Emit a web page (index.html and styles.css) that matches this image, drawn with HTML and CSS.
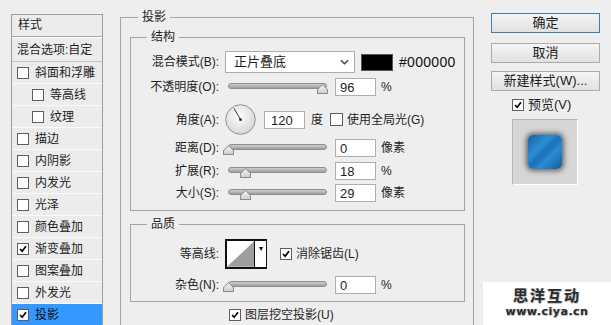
FILE: index.html
```html
<!DOCTYPE html>
<html lang="zh-CN">
<head>
    <meta charset="UTF-8">
    <title>图层样式</title>
    <link rel="stylesheet" href="styles.css">
</head>
<body>
    <div class="dialog">
        <div class="styles-list">
            <div class="list-head">样式</div>
            <div class="list-blend">混合选项:自定</div>
            <div class="list-item"><span class="check"></span>斜面和浮雕</div>
            <div class="list-item sub"><span class="check"></span>等高线</div>
            <div class="list-item sub"><span class="check"></span>纹理</div>
            <div class="list-item"><span class="check"></span>描边</div>
            <div class="list-item"><span class="check"></span>内阴影</div>
            <div class="list-item"><span class="check"></span>内发光</div>
            <div class="list-item"><span class="check"></span>光泽</div>
            <div class="list-item"><span class="check"></span>颜色叠加</div>
            <div class="list-item"><span class="check on"><svg viewBox="0 0 12 12"><path d="M2.5 6 L5 8.6 L9.6 2.8"/></svg></span>渐变叠加</div>
            <div class="list-item"><span class="check"></span>图案叠加</div>
            <div class="list-item"><span class="check"></span>外发光</div>
            <div class="list-item selected"><span class="check on"><svg viewBox="0 0 12 12"><path d="M2.5 6 L5 8.6 L9.6 2.8"/></svg></span>投影</div>
        </div>

        <div class="main">
            <fieldset class="group outer">
                <legend class="outer-title">投影</legend>

                <fieldset class="group structure">
                    <legend>结构</legend>
                    <div class="row r-blend">
                        <span class="lbl">混合模式(B):</span>
                        <div class="select">
                            <span>正片叠底</span>
                            <svg class="chev" viewBox="0 0 10 6"><path d="M1 1 L5 5 L9 1"/></svg>
                        </div>
                        <span class="swatch"></span>
                        <span class="hex">#000000</span>
                    </div>
                    <div class="row r-opacity">
                        <span class="lbl">不透明度(O):</span>
                        <div class="slider"><span class="track"></span><span class="thumb" style="left: 89px"></span></div>
                        <span class="num">96</span>
                        <span class="unit">%</span>
                    </div>
                    <div class="row r-angle">
                        <span class="lbl">角度(A):</span>
                        <svg class="dial" viewBox="0 0 31 31">
                            <defs>
                                <radialGradient id="dialFill" cx="0.45" cy="0.4" r="0.6">
                                    <stop offset="0" stop-color="#ffffff"/>
                                    <stop offset="1" stop-color="#d6d6d6"/>
                                </radialGradient>
                            </defs>
                            <circle cx="15.5" cy="15.5" r="14.8" fill="url(#dialFill)" stroke="#8a8a8a" stroke-width="0.9"/>
                            <line x1="15.5" y1="15.5" x2="9" y2="4.3" stroke="#333" stroke-width="1"/>
                            <circle cx="15.5" cy="15.5" r="1.5" fill="#333"/>
                        </svg>
                        <span class="num angle">120</span>
                        <span class="unit">度</span>
                        <span class="check global"></span>
                        <span class="check-text">使用全局光(G)</span>
                    </div>
                    <div class="row r-distance">
                        <span class="lbl">距离(D):</span>
                        <div class="slider"><span class="track"></span><span class="thumb" style="left: -5px"></span></div>
                        <span class="num">0</span>
                        <span class="unit">像素</span>
                    </div>
                    <div class="row r-spread">
                        <span class="lbl">扩展(R):</span>
                        <div class="slider"><span class="track"></span><span class="thumb" style="left: 12px"></span></div>
                        <span class="num">18</span>
                        <span class="unit">%</span>
                    </div>
                    <div class="row r-size">
                        <span class="lbl">大小(S):</span>
                        <div class="slider"><span class="track"></span><span class="thumb" style="left: 12px"></span></div>
                        <span class="num">29</span>
                        <span class="unit">像素</span>
                    </div>
                </fieldset>

                <fieldset class="group quality">
                    <legend>品质</legend>
                    <div class="row r-contour">
                        <span class="lbl">等高线:</span>
                        <div class="contour">
                            <svg class="curve" viewBox="0 0 28 26"><polygon points="0,26 28,0 28,26" fill="#9e9e9e"/></svg>
                            <span class="contour-drop">&#9662;</span>
                        </div>
                        <span class="check on anti"><svg viewBox="0 0 12 12"><path d="M2.5 6 L5 8.6 L9.6 2.8"/></svg></span>
                        <span class="check-text">消除锯齿(L)</span>
                    </div>
                    <div class="row r-noise">
                        <span class="lbl">杂色(N):</span>
                        <div class="slider"><span class="track"></span><span class="thumb" style="left: -5px"></span></div>
                        <span class="num">0</span>
                        <span class="unit">%</span>
                    </div>
                </fieldset>

                <div class="knockout">
                    <span class="check on"><svg viewBox="0 0 12 12"><path d="M2.5 6 L5 8.6 L9.6 2.8"/></svg></span>
                    <span class="check-text">图层挖空投影(U)</span>
                </div>
            </fieldset>
        </div>

        <div class="side">
            <button class="btn default">确定</button>
            <button class="btn">取消</button>
            <button class="btn">新建样式(W)...</button>
            <div class="preview-row">
                <span class="check on"><svg viewBox="0 0 12 12"><path d="M2.5 6 L5 8.6 L9.6 2.8"/></svg></span>
                <span class="check-text">预览(V)</span>
            </div>
            <div class="preview">
                <div class="preview-tile"></div>
            </div>
        </div>
    </div>

    <div class="watermark">
        <div class="wm-name">思洋互动</div>
        <div class="wm-url">www.ciya.cn</div>
    </div>
</body>
</html>
```

FILE: styles.css
```css
body {
    margin: 0;
    height: 325px;
    overflow: hidden;
    background-color: #eeeeee;
    color: #1e1e1e;
    font-family: 'Liberation Sans', 'Noto Sans CJK SC', sans-serif;
    font-size: 12px;
    line-height: 16px;
    position: relative;
}
.dialog {
    display: flex;
    align-items: flex-start;
    height: 325px;
    overflow: hidden;
}

/* left list of styles */
.styles-list {
    margin: 14px 0 0 11px;
    width: 92px;
    box-sizing: border-box;
    border: 1px solid #9c9c9c;
    border-bottom: none;
    background-color: #ececec;
}
.list-head {
    height: 21px;
    line-height: 20px;
    padding-left: 6px;
    border-bottom: 1px solid #a8a8a8;
    box-shadow: 0 1px 0 #ffffff;
}
.list-blend {
    height: 22px;
    line-height: 22px;
    margin-top: 2px;
    padding-left: 5px;
    border-bottom: 1px solid #c4c4c4;
    white-space: nowrap;
}
.list-item {
    display: flex;
    align-items: center;
    height: 21px;
    padding-left: 5px;
    border-bottom: 1px solid #fafafa;
    white-space: nowrap;
}
.list-item .check {
    margin-right: 6px;
}
.list-item.sub {
    padding-left: 20px;
}
.list-item.selected {
    background-color: #3399ff;
    color: #111;
    height: 22px;
    border-bottom: none;
}

/* checkboxes */
.check {
    display: inline-block;
    width: 12px;
    height: 12px;
    box-sizing: border-box;
    border: 1px solid #5e5e5e;
    background-color: #fff;
    flex: none;
}
.check svg {
    display: block;
    width: 10px;
    height: 10px;
}
.check svg path {
    fill: none;
    stroke: #000;
    stroke-width: 2;
}
.check-text {
    margin-left: 4px;
    white-space: nowrap;
}

/* group boxes */
.main {
    margin: 9px 0 0 17px;
}
.group {
    margin: 0;
    border: 1px solid #a4a4a4;
    min-width: 0;
}
.group legend {
    padding: 0 4px;
    line-height: 16px;
    margin-left: 16px;
}
.outer {
    width: 354px;
    box-sizing: border-box;
    padding: 4px 8px 20px 9px;
}
.outer .outer-title {
    margin-left: 8px;
}
.structure {
    padding: 6px 0 8px 0;
}
.quality {
    margin-top: 5px;
    padding: 7px 0 7px 0;
}

/* rows */
.row {
    display: flex;
    align-items: center;
    height: 18px;
    white-space: nowrap;
}
.lbl {
    width: 88px;
    text-align: right;
    flex: none;
}
.r-blend {
    height: 22px;
}
.r-opacity {
    margin-top: 5px;
}
.r-angle {
    margin-top: 8px;
    height: 31px;
}
.r-distance {
    margin-top: 4px;
}
.r-spread {
    margin-top: 5px;
}
.r-size {
    margin-top: 4px;
}
.r-contour {
    height: 30px;
}
.r-noise {
    margin-top: 7px;
}

.select {
    margin-left: 6px;
    width: 130px;
    height: 22px;
    box-sizing: border-box;
    border: 1px solid #adadad;
    background-color: #fff;
    display: flex;
    align-items: center;
    justify-content: space-between;
    padding: 0 5px 0 8px;
    font-size: 13px;
}
.chev {
    width: 9px;
    height: 6px;
}
.chev path {
    fill: none;
    stroke: #444;
    stroke-width: 1.6;
}
.swatch {
    margin-left: 6px;
    width: 32px;
    height: 17px;
    box-sizing: border-box;
    background-color: #000;
    border: 1px solid #555;
}
.hex {
    margin-left: 6px;
    font-size: 14px;
    color: #111;
    letter-spacing: 0.3px;
}

/* sliders */
.slider {
    position: relative;
    margin-left: 9px;
    width: 99px;
    height: 18px;
    flex: none;
}
.track {
    display: block;
    margin-top: 5px;
    height: 4px;
    border: 1px solid #8e8e8e;
    border-radius: 3px;
    background: linear-gradient(#cfcfcf, #9d9d9d);
}
.thumb {
    position: absolute;
    top: 6px;
    width: 11px;
    height: 10px;
    background: #8a8a8a;
    clip-path: polygon(50% 0, 100% 55%, 100% 100%, 0 100%, 0 55%);
}
.thumb::after {
    content: '';
    position: absolute;
    left: 1px;
    top: 1px;
    right: 1px;
    bottom: 1px;
    background: linear-gradient(#f4f4f4, #cfcfcf);
    clip-path: polygon(50% 0, 100% 55%, 100% 100%, 0 100%, 0 55%);
}
.num {
    margin-left: 8px;
    width: 41px;
    height: 18px;
    box-sizing: border-box;
    border: 1px solid #aeaeae;
    background-color: #fff;
    padding-left: 4px;
    line-height: 17px;
    font-size: 13px;
    flex: none;
}
.unit {
    margin-left: 5px;
    font-size: 12px;
}

/* angle */
.dial {
    margin-left: 6px;
    width: 31px;
    height: 31px;
    flex: none;
}
.num.angle {
    margin-left: 8px;
    padding-left: 6px;
}
.r-angle .unit {
    margin-left: 6px;
}
.check.global {
    margin-left: 7px;
    width: 13px;
    height: 13px;
}

/* contour */
.contour {
    margin-left: 6px;
    width: 42px;
    height: 30px;
    box-sizing: border-box;
    border: 2px solid #111;
    border-right-width: 1px;
    background-color: #fff;
    display: flex;
}
.curve {
    width: 28px;
    height: 26px;
    display: block;
}
.contour-drop {
    width: 11px;
    border-left: 1px solid #111;
    font-size: 8px;
    line-height: 16px;
    text-align: center;
    color: #000;
}
.check.anti {
    margin-left: 13px;
}

.knockout {
    display: flex;
    align-items: center;
    height: 18px;
    margin-top: 4px;
    padding-left: 99px;
}

/* right column */
.side {
    margin-left: 17px;
    padding-top: 13px;
    width: 109px;
    display: flex;
    flex-direction: column;
}
.btn {
    height: 20px;
    padding: 0;
    border: 1px solid #acacac;
    background: linear-gradient(#f4f4f4, #e1e1e1);
    font-family: 'Liberation Sans', 'Noto Sans CJK SC', sans-serif;
    font-size: 13px;
    color: #1a1a1a;
    line-height: 18px;
}
.btn + .btn {
    margin-top: 10px;
}
.btn + .btn + .btn {
    margin-top: 8px;
}
.btn.default {
    border-color: #3c7fb1;
}
.preview-row {
    display: flex;
    align-items: center;
    margin-top: 7px;
    height: 14px;
    padding-left: 21px;
    font-size: 13px;
}
.preview {
    margin: 7px 0 0 21px;
    width: 66px;
    height: 66px;
    box-sizing: border-box;
    background-color: #d6d6d6;
    border: 1px solid #b4b4b4;
    border-right-color: #fff;
    border-bottom-color: #fff;
    display: flex;
    align-items: center;
    justify-content: center;
}
.preview-tile {
    width: 34px;
    height: 34px;
    border-radius: 5px;
    background: linear-gradient(135deg, #1b5f9c 0%, #2b8fd6 35%, #1c6fb5 50%, #2a8bd2 65%, #175c98 100%);
    box-shadow: 0 0 5px 2px rgba(30, 30, 30, 0.6);
}

/* watermark */
.watermark {
    position: absolute;
    right: 0;
    bottom: 0;
    width: 128px;
    height: 43px;
    background-color: #fff;
    text-align: center;
    color: #2a2a2a;
    font-weight: bold;
}
.wm-name {
    font-family: 'Noto Sans CJK SC', sans-serif;
    font-size: 15px;
    line-height: 20px;
    margin-top: 3px;
    letter-spacing: 2px;
    text-shadow: 1px 0 0 #bbb, 0 1px 0 #bbb, -1px 0 0 #ddd;
}
.wm-url {
    font-family: 'DejaVu Sans', sans-serif;
    font-size: 11px;
    line-height: 14px;
    letter-spacing: 0.5px;
    text-shadow: 1px 0 0 #bbb, 0 1px 0 #bbb;
}
```
